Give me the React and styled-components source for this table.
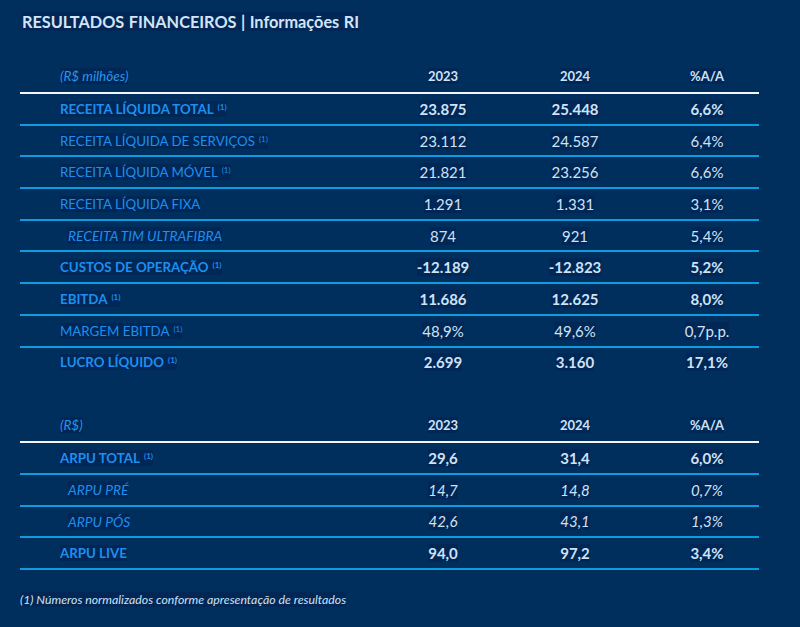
import React from 'react'
import styled, { createGlobalStyle } from 'styled-components'

const GlobalStyle = createGlobalStyle`
  html, body {
    margin: 0;
    padding: 0;
    background: #002e5d;
  }
  body {
    font-family: Lato, "Open Sans", sans-serif;
  }
`

// sub: indented italic label, italicValues: numbers set in italic too
const financeiros = [
  { label: 'RECEITA LÍQUIDA TOTAL', note: true, bold: true, values: ['23.875', '25.448', '6,6%'] },
  { label: 'RECEITA LÍQUIDA DE SERVIÇOS', note: true, values: ['23.112', '24.587', '6,4%'] },
  { label: 'RECEITA LÍQUIDA MÓVEL', note: true, values: ['21.821', '23.256', '6,6%'] },
  { label: 'RECEITA LÍQUIDA FIXA', values: ['1.291', '1.331', '3,1%'] },
  { label: 'RECEITA TIM ULTRAFIBRA', sub: true, values: ['874', '921', '5,4%'] },
  { label: 'CUSTOS DE OPERAÇÃO', note: true, bold: true, values: ['-12.189', '-12.823', '5,2%'] },
  { label: 'EBITDA', note: true, bold: true, values: ['11.686', '12.625', '8,0%'] },
  { label: 'MARGEM EBITDA', note: true, values: ['48,9%', '49,6%', '0,7p.p.'] },
  { label: 'LUCRO LÍQUIDO', note: true, bold: true, values: ['2.699', '3.160', '17,1%'], last: true },
]

const arpu = [
  { label: 'ARPU TOTAL', note: true, bold: true, values: ['29,6', '31,4', '6,0%'] },
  { label: 'ARPU PRÉ', sub: true, italicValues: true, values: ['14,7', '14,8', '0,7%'] },
  { label: 'ARPU PÓS', sub: true, italicValues: true, values: ['42,6', '43,1', '1,3%'] },
  { label: 'ARPU LIVE', bold: true, values: ['94,0', '97,2', '3,4%'] },
]

const DataTable = ({ unit, rows }) => (
  <Table>
    <HeaderRow>
      <UnitCell>
        <Mark>{unit}</Mark>
      </UnitCell>
      {['2023', '2024', '%A/A'].map((year) => (
        <HeadCell key={year}>
          <Mark>{year}</Mark>
        </HeadCell>
      ))}
    </HeaderRow>
    {rows.map((row) => (
      <Row key={row.label} $last={row.last}>
        <LabelCell $bold={row.bold} $sub={row.sub}>
          <Mark>
            {row.label}
            {row.note && <Note>(1)</Note>}
          </Mark>
        </LabelCell>
        {row.values.map((value, i) => (
          <ValueCell key={i} $bold={row.bold} $italic={row.italicValues}>
            <Mark>{value}</Mark>
          </ValueCell>
        ))}
      </Row>
    ))}
  </Table>
)

const App = () => {
  return (
    <>
      <GlobalStyle />
      <Page>
        <Title>
          <Mark>RESULTADOS FINANCEIROS&nbsp;|&nbsp;Informações RI</Mark>
        </Title>
        <Tables>
          <DataTable unit="(R$ milhões)" rows={financeiros} />
          <DataTable unit="(R$)" rows={arpu} />
        </Tables>
        <Footnote>
          <Mark>(1) Números normalizados conforme apresentação de resultados</Mark>
        </Footnote>
      </Page>
    </>
  )
}

const Page = styled.main`
  width: 800px;
  height: 627px;
  box-sizing: border-box;
  padding: 11px 0 0 22px;
  background: #002e5d;
  display: flex;
  flex-direction: column;
`

const Mark = styled.span`
  background: rgba(0, 20, 60, 0.22);
`

const Title = styled.h1`
  margin: 0;
  font-size: 16.3px;
  font-weight: 700;
  color: #d4e4f6;
  line-height: 22px;
  word-spacing: 0.5px;
`

const Tables = styled.div`
  display: flex;
  flex-direction: column;
  gap: 30px;
  margin: 27px 0 0 -2px;
  width: 739px;
`

const Table = styled.div`
  display: flex;
  flex-direction: column;
`

const gridCols = `
  display: grid;
  grid-template-columns: 357px 132px 132px 118px;
  align-items: center;
`

const HeaderRow = styled.div`
  ${gridCols}
  height: 32px;
  border-bottom: 2px solid #f2f6fb;
`

const Row = styled.div`
  ${gridCols}
  height: 29.7px;
  border-bottom: 2px solid ${({ $last }) => ($last ? 'transparent' : '#0e9be0')};
`

const UnitCell = styled.div`
  padding-left: 40px;
  font-size: 13.5px;
  font-style: italic;
  color: #2a95ec;
`

const HeadCell = styled.div`
  text-align: center;
  font-size: 13px;
  font-weight: 700;
  color: #cfe2f6;

  &:last-child {
    padding-left: 14px;
  }
`

const LabelCell = styled.div`
  padding-left: ${({ $sub }) => ($sub ? '48px' : '40px')};
  font-size: ${({ $sub }) => ($sub ? '13.8px' : '13.3px')};
  font-weight: ${({ $bold }) => ($bold ? 700 : 400)};
  font-style: ${({ $sub }) => ($sub ? 'italic' : 'normal')};
  color: #1e8fef;
  white-space: nowrap;
`

const Note = styled.sup`
  font-size: 8px;
  margin-left: 4px;
  vertical-align: 4px;
`

const ValueCell = styled.div`
  text-align: center;
  font-size: 15px;
  font-weight: ${({ $bold }) => ($bold ? 700 : 400)};
  font-style: ${({ $italic }) => ($italic ? 'italic' : 'normal')};
  color: #cfe2f6;

  &:last-child {
    padding-left: 14px;
  }
`

const Footnote = styled.p`
  margin: 22px 0 0 -2px;
  font-size: 12.3px;
  font-style: italic;
  color: #cfe2f6;
`

export default App
